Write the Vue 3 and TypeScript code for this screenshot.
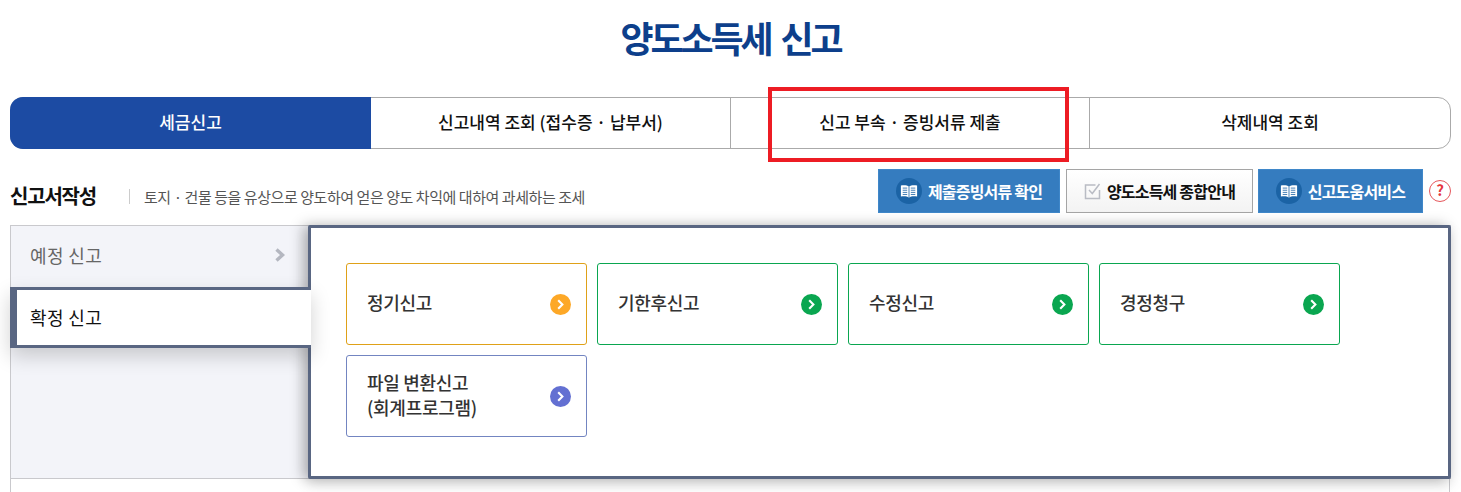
<template>
  <div class="page">
    <h1 class="title">양도소득세 신고</h1>

    <div class="tabs">
      <a
        v-for="(tab, i) in tabs"
        :key="tab"
        class="tab"
        :class="{ on: i === 0 }"
      >{{ tab }}</a>
      <div class="red-box"></div>
    </div>

    <div class="head-row">
      <h2 class="head-title">신고서작성</h2>
      <p class="head-desc">토지 · 건물 등을 유상으로 양도하여 얻은 양도 차익에 대하여 과세하는 조세</p>
      <div class="head-btns">
        <button class="btn blue wide">
          <span class="book">
            <svg viewBox="0 0 20 16" width="18" height="15">
              <path d="M10 2.6 C8 1.2 5 .8 1 1.4 V13.6 C5 13 8 13.4 10 15 C12 13.4 15 13 19 13.6 V1.4 C15 .8 12 1.2 10 2.6 Z" fill="#fff" />
              <path d="M10 2.6 V15 M3 4.2 H8 M3 6.6 H8 M3 9 H8 M3 11.3 H8 M12 4.2 H17 M12 6.6 H17 M12 9 H17 M12 11.3 H17" stroke="#1b63a5" stroke-width="0.9" fill="none" />
            </svg>
          </span>
          제출증빙서류 확인
        </button>
        <button class="btn plain">
          <svg viewBox="0 0 18 18" width="18" height="18" class="check">
            <path d="M11.5 3 H1.5 V16.5 H15.5 V8" fill="none" stroke="#b9bcc4" stroke-width="1.5" />
            <path d="M5 8 L8.3 11.5 L15.5 2" fill="none" stroke="#b9bcc4" stroke-width="1.5" />
          </svg>
          양도소득세 종합안내
        </button>
        <button class="btn blue help">
          <span class="book">
            <svg viewBox="0 0 20 16" width="18" height="15">
              <path d="M10 2.6 C8 1.2 5 .8 1 1.4 V13.6 C5 13 8 13.4 10 15 C12 13.4 15 13 19 13.6 V1.4 C15 .8 12 1.2 10 2.6 Z" fill="#fff" />
              <path d="M10 2.6 V15 M3 4.2 H8 M3 6.6 H8 M3 9 H8 M3 11.3 H8 M12 4.2 H17 M12 6.6 H17 M12 9 H17 M12 11.3 H17" stroke="#1b63a5" stroke-width="0.9" fill="none" />
            </svg>
          </span>
          신고도움서비스
        </button>
        <span class="question">?</span>
      </div>
    </div>

    <div class="panel">
      <div class="side">
        <div class="side-item">
          <span>예정 신고</span>
          <svg viewBox="0 0 12 14" width="12" height="14">
            <path d="M2.5 1.5 L8.5 7 L2.5 12.5" fill="none" stroke="#b4b7c0" stroke-width="3.4" />
          </svg>
        </div>
        <div class="side-item active"><span>확정 신고</span></div>
      </div>
      <div class="main">
        <a
          v-for="card in cards"
          :key="card.label"
          class="card"
          :class="card.kind"
        >
          <span class="card-label">
            <template v-for="(line, i) in card.label.split('\n')" :key="i">
              <br v-if="i > 0" />{{ line }}
            </template>
          </span>
          <span class="arrow">
            <svg viewBox="0 0 21 21" width="21" height="21">
              <path d="M8.2 6.2 L12.4 10.5 L8.2 14.8" fill="none" stroke="#fff" stroke-width="2.1" />
            </svg>
          </span>
        </a>
      </div>
    </div>
    <div class="below"></div>
  </div>
</template>

<script setup lang="ts">
interface Card {
  label: string
  kind: 'orange' | 'green' | 'purple'
}

const tabs: string[] = [
  '세금신고',
  '신고내역 조회 (접수증 · 납부서)',
  '신고 부속 · 증빙서류 제출',
  '삭제내역 조회',
]

const cards: Card[] = [
  { label: '정기신고', kind: 'orange' },
  { label: '기한후신고', kind: 'green' },
  { label: '수정신고', kind: 'green' },
  { label: '경정청구', kind: 'green' },
  { label: '파일 변환신고\n(회계프로그램)', kind: 'purple' },
]
</script>

<style>
html,
body {
  margin: 0;
  overflow: hidden;
  background: #fff;
}
</style>

<style scoped>
.page {
  width: 1461px;
  height: 492px;
  padding: 0 10px;
  box-sizing: border-box;
  overflow: hidden;
  font-family: "Noto Sans CJK KR", "Noto Sans", sans-serif;
  color: #222;
}

.title {
  margin: 0;
  height: 97px;
  padding-top: 12px;
  box-sizing: border-box;
  text-align: center;
  font-size: 36px;
  line-height: 50px;
  font-weight: 700;
  letter-spacing: -3.1px;
  word-spacing: 5px;
  color: #0d3f8b;
}

.tabs {
  position: relative;
  display: grid;
  grid-template-columns: 360px 359px 359px 361px;
  height: 52px;
  box-sizing: border-box;
  border: 1px solid #aaa;
  border-radius: 13px;
}

.tab {
  display: flex;
  align-items: center;
  justify-content: center;
  padding-bottom: 3px;
  font-size: 17px;
  font-weight: 500;
  color: #111;
  border-left: 1px solid #aaa;
}

.tab:first-child {
  margin: -1px 0 -1px -1px;
  border-left: 0;
  border-radius: 13px 0 0 13px;
  background: #1c4ba3;
  color: #fff;
}

.tab:nth-child(2) {
  border-left: 0;
}

.red-box {
  position: absolute;
  left: 757px;
  top: -11px;
  width: 301px;
  height: 75px;
  box-sizing: border-box;
  border: 4px solid #ed1c24;
}

.head-row {
  display: flex;
  align-items: center;
  height: 64px;
  padding-top: 20px;
  box-sizing: border-box;
}

.head-title {
  margin: 8px 0 0;
  width: 120px;
  flex: none;
  font-size: 20px;
  font-weight: 700;
  letter-spacing: -1.2px;
  color: #111;
}

.head-desc {
  margin: 10px 0 0 -1px;
  padding-left: 14px;
  border-left: 1px solid #ccc;
  font-size: 15px;
  line-height: 15px;
  letter-spacing: -0.44px;
  color: #555;
}

.head-btns {
  display: flex;
  align-items: center;
  margin-left: auto;
  gap: 6px;
  height: 44px;
}

.btn {
  display: flex;
  align-items: center;
  justify-content: center;
  height: 44px;
  padding: 0;
  box-sizing: border-box;
  font-family: inherit;
  font-size: 16px;
  font-weight: 700;
  letter-spacing: -0.8px;
}

.btn.blue {
  gap: 6px;
  border: 1px solid #3f87c9;
  background: #357cbf;
  color: #fff;
}

.btn.wide {
  width: 182px;
}

.btn.help {
  width: 165px;
  margin-left: -1px;
}

.btn.plain {
  width: 187px;
  gap: 5px;
  border: 1px solid #a5a5a5;
  background: linear-gradient(#fff, #f3f3f3);
  color: #111;
}

.book {
  display: flex;
  align-items: center;
  justify-content: center;
  width: 26px;
  height: 26px;
  border-radius: 50%;
  background: #1b63a5;
}

.question {
  width: 22px;
  height: 22px;
  box-sizing: border-box;
  border: 1.5px solid #e5565b;
  border-radius: 50%;
  text-align: center;
  font-size: 15px;
  line-height: 18px;
  font-weight: 700;
  color: #e5363d;
}

.panel {
  position: relative;
  display: flex;
  height: 254px;
  margin-top: 12px;
  box-sizing: border-box;
  border: 1px solid #c9c9cd;
  border-right: 0;
  background: #f3f4f9;
}

.side {
  width: 297px;
  flex: none;
}

.side-item {
  display: flex;
  align-items: center;
  justify-content: space-between;
  height: 61px;
  padding: 0 22px 3px 19px;
  box-sizing: border-box;
  font-size: 18px;
  letter-spacing: 0.4px;
  color: #666;
}

.side-item.active {
  position: relative;
  z-index: 2;
  width: 301px;
  height: 61px;
  margin-left: -1px;
  padding: 0 0 1px 13px;
  border: 3px solid #596682;
  border-left-width: 7px;
  border-right: 0;
  background: #fff;
  color: #111;
  box-shadow: 0 8px 20px rgba(0, 0, 0, 0.18);
}

.main {
  position: relative;
  z-index: 1;
  flex: 1;
  display: flex;
  flex-wrap: wrap;
  align-content: flex-start;
  gap: 10px;
  margin: -1px 0 -1px;
  padding: 35px 0 0 35px;
  box-sizing: border-box;
  border: 3px solid #596682;
  border-radius: 2px;
  background: #fff;
  box-shadow: -5px 0 14px rgba(0, 0, 0, 0.26), 0 6px 14px rgba(0, 0, 0, 0.1);
}

.card {
  display: flex;
  align-items: center;
  justify-content: space-between;
  width: 241px;
  height: 82px;
  padding: 0 15px 0 20px;
  box-sizing: border-box;
  border: 1px solid;
  border-radius: 3px;
  font-size: 18px;
  line-height: 25px;
  font-weight: 500;
  letter-spacing: -0.3px;
  color: #333;
}

.card-label {
  margin-top: -3px;
}

.arrow {
  display: flex;
  width: 21px;
  height: 21px;
  border-radius: 50%;
}

.card.orange {
  border-color: #dfa118;
}

.card.orange .arrow {
  background: #fda827;
}

.card.green {
  border-color: #0aa650;
}

.card.green .arrow {
  background: #0aa650;
}

.card.purple {
  border-color: #7385c1;
}

.card.purple .arrow {
  background: #6370d2;
}

.below {
  width: 1440px;
  height: 20px;
  box-sizing: border-box;
  border-left: 1px solid #c9c9cd;
  border-right: 1px solid #c9c9cd;
}
</style>
